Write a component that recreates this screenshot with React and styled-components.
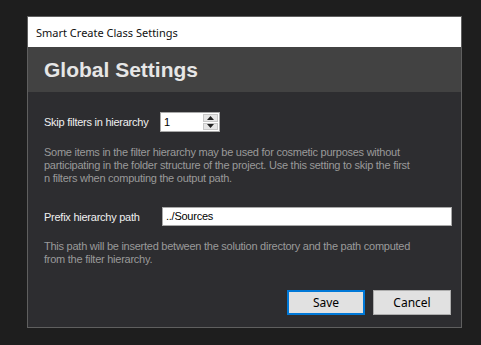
import styled, { createGlobalStyle } from 'styled-components'

const Global = createGlobalStyle`
  html, body {
    margin:0;
    padding:0;
    background:#1e1e1e;
  }
`

const Page = styled.div`
  width:481px;
  height:345px;
  padding:16px 0 0 27px;
  box-sizing:border-box;
`

const Window = styled.div`
  width:435px;
  height:312px;
  box-sizing:border-box;
  border:1px solid #5f5f5f;
  display:flex;
  flex-direction:column;
  background:#2d2d30;
`

const TitleBar = styled.div`
  height:30px;
  background:#fff;
  display:flex;
  align-items:center;
  padding-left:8px;
  font-family:"Noto Sans", sans-serif;
  font-size:11px;
  color:#111;
`

const Header = styled.div`
  height:45px;
  background:#424242;
  display:flex;
  align-items:center;
  padding-left:16px;
  font-family:"Liberation Sans", Arial, sans-serif;
  font-weight:bold;
  font-size:21px;
  color:#e6e6e6;
`

const Content = styled.div`
  flex:1;
  display:flex;
  flex-direction:column;
  padding:20px 8px 0 16px;
  font-family:"Liberation Sans", Arial, sans-serif;
  font-size:11px;
  letter-spacing:-0.25px;
`

const Row = styled.div`
  display:flex;
  align-items:center;
  height:${props => props.h}px;
  margin-top:${props => props.top || 0}px;
`

const Label = styled.span`
  color:#f0f0f0;
  width:${props => props.w}px;
  white-space:nowrap;
`

const Help = styled.p`
  margin:${props => props.top}px 0 0 0;
  color:#9a9a9a;
  line-height:13px;
  white-space:nowrap;
`

const Spin = styled.div`
  width:60px;
  height:20px;
  box-sizing:border-box;
  border:1px solid #a8a8a8;
  background:#fff;
  display:flex;
`

const SpinValue = styled.span`
  flex:1;
  padding:3px 0 0 3px;
  color:#000;
`

const SpinButtons = styled.div`
  width:15px;
  display:flex;
  flex-direction:column;
  padding:1px 1px 1px 0;
  gap:1px;
`

const SpinBtn = styled.div`
  flex:1;
  background:#e6e6e6;
  border:1px solid #c8c8c8;
  display:flex;
  align-items:center;
  justify-content:center;
`

const TextBox = styled.div`
  width:290px;
  height:19px;
  box-sizing:border-box;
  border:1px solid #a8a8a8;
  background:#fff;
  color:#000;
  padding:2px 0 0 3px;
`

const Buttons = styled.div`
  margin-top:auto;
  margin-bottom:12px;
  display:flex;
  justify-content:flex-end;
  gap:8px;
  padding-right:2px;
`

const Button = styled.div`
  width:78px;
  height:25px;
  box-sizing:border-box;
  background:#e1e1e1;
  border:${props => props.primary ? '2px solid #0078d7' : '1px solid #adadad'};
  display:flex;
  align-items:center;
  justify-content:center;
  font-family:"Noto Sans", sans-serif;
  font-size:12px;
  letter-spacing:0;
  color:#000;
`

function Arrow({ up }) {
  return (
    <svg width="7" height="4" viewBox="0 0 7 4">
      <path d={up ? 'M0 4 L3.5 0 L7 4 Z' : 'M0 0 L3.5 4 L7 0 Z'} fill="#222" />
    </svg>
  )
}

export default function App() {
  return (
    <Page>
      <Global />
      <Window>
        <TitleBar>Smart Create Class Settings</TitleBar>
        <Header>Global Settings</Header>
        <Content>
          <Row h={20}>
            <Label w={116}>Skip filters in hierarchy</Label>
            <Spin>
              <SpinValue>1</SpinValue>
              <SpinButtons>
                <SpinBtn><Arrow up /></SpinBtn>
                <SpinBtn><Arrow /></SpinBtn>
              </SpinButtons>
            </Spin>
          </Row>
          <Help top={14}>
            Some items in the filter hierarchy may be used for cosmetic purposes without<br />
            participating in the folder structure of the project. Use this setting to skip the first<br />
            n filters when computing the output path.
          </Help>
          <Row h={19} top={22}>
            <Label w={118}>Prefix hierarchy path</Label>
            <TextBox>../Sources</TextBox>
          </Row>
          <Help top={14}>
            This path will be inserted between the solution directory and the path computed<br />
            from the filter hierarchy.
          </Help>
          <Buttons>
            <Button primary>Save</Button>
            <Button>Cancel</Button>
          </Buttons>
        </Content>
      </Window>
    </Page>
  )
}
